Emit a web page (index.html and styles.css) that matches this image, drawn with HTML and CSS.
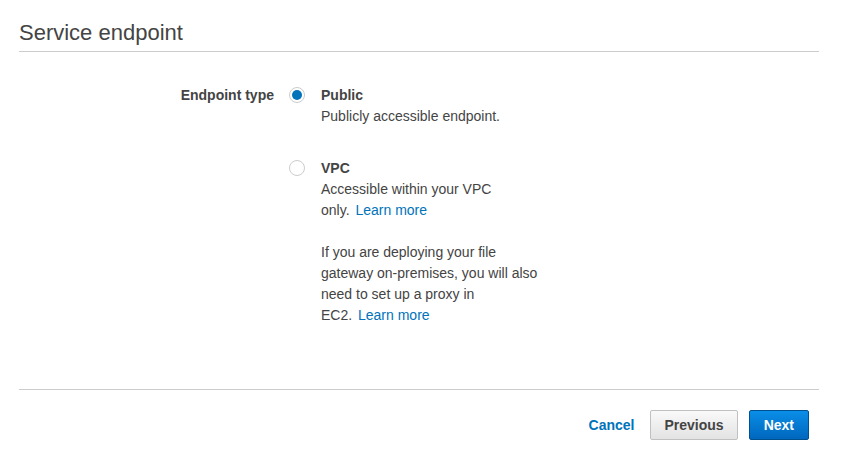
FILE: index.html
```html
<!DOCTYPE html>
<html lang="en">
<head>
  <meta charset="UTF-8">
  <title>Service endpoint</title>
  <link rel="stylesheet" href="styles.css">
</head>
<body>
  <div class="page">
    <h2 class="section-title">Service endpoint</h2>

    <div class="form-row">
      <div class="field-label">Endpoint type</div>
      <div class="options">
        <label class="option">
          <span class="radio checked"></span>
          <span class="option-text">
            <span class="option-name">Public</span>
            <span class="option-desc">Publicly accessible endpoint.</span>
          </span>
        </label>

        <label class="option">
          <span class="radio"></span>
          <span class="option-text">
            <span class="option-name">VPC</span>
            <span class="option-desc">Accessible within your VPC <span class="nowrap">only. <a href="#">Learn more</a></span></span>
            <span class="option-note">If you are deploying your file gateway on-premises, you will also need to set up a proxy in <span class="nowrap">EC2. <a href="#">Learn more</a></span></span>
          </span>
        </label>
      </div>
    </div>

    <div class="footer">
      <a href="#" class="cancel-link">Cancel</a>
      <button class="btn btn-default">Previous</button>
      <button class="btn btn-primary">Next</button>
    </div>
  </div>
</body>
</html>
```

FILE: styles.css
```css
body {
  margin: 0;
  padding: 0;
  font-family: Arial, "Liberation Sans", sans-serif;
  font-size: 14px;
  color: #444;
  background-color: #fff;
}
.page {
  width: 800px;
  padding: 0 19px;
}
.section-title {
  margin: 0;
  padding: 21px 0 6px;
  font-size: 22px;
  font-weight: normal;
  line-height: 24px;
  color: #444;
  border-bottom: 1px solid #ccc;
}
.form-row {
  display: flex;
  margin-top: 33px;
  line-height: 21px;
}
.field-label {
  width: 255px;
  text-align: right;
  font-weight: bold;
  padding-right: 15px;
}
.options {
  display: flex;
  flex-direction: column;
  gap: 31px;
}
.option {
  display: flex;
  align-items: flex-start;
}
.radio {
  box-sizing: border-box;
  width: 16px;
  height: 16px;
  margin-top: 2px;
  margin-right: 16px;
  border: 1px solid #ccc;
  border-radius: 50%;
  background-color: #fff;
  position: relative;
}
.radio.checked::after {
  content: "";
  position: absolute;
  left: 2px;
  top: 2px;
  width: 10px;
  height: 10px;
  border-radius: 50%;
  background-color: #0073bb;
}
.option-text {
  display: flex;
  flex-direction: column;
  width: 224px;
}
.option-name {
  font-weight: bold;
}
.option-note {
  margin-top: 21px;
}
.nowrap {
  white-space: nowrap;
}
.nowrap a {
  margin-left: 2px;
}
a {
  color: #0073bb;
  text-decoration: none;
}
.footer {
  display: flex;
  justify-content: flex-end;
  align-items: center;
  margin-top: 63px;
  padding-top: 20px;
  padding-right: 10px;
  border-top: 1px solid #ccc;
}
.cancel-link {
  font-weight: bold;
  margin-right: 15px;
}
.btn {
  height: 30px;
  padding: 0 14px;
  font-family: Arial, "Liberation Sans", sans-serif;
  font-size: 14px;
  font-weight: bold;
  border-radius: 2px;
  cursor: pointer;
}
.btn-default {
  color: #444;
  background: linear-gradient(#f9f9f9, #e3e3e3);
  border: 1px solid #c0c0c0;
  padding: 0 13px 0 14px;
  margin-right: 11px;
}
.btn-primary {
  color: #fff;
  background: linear-gradient(#0a8ee8, #0067bd);
  border: 1px solid #00508f;
}
```
